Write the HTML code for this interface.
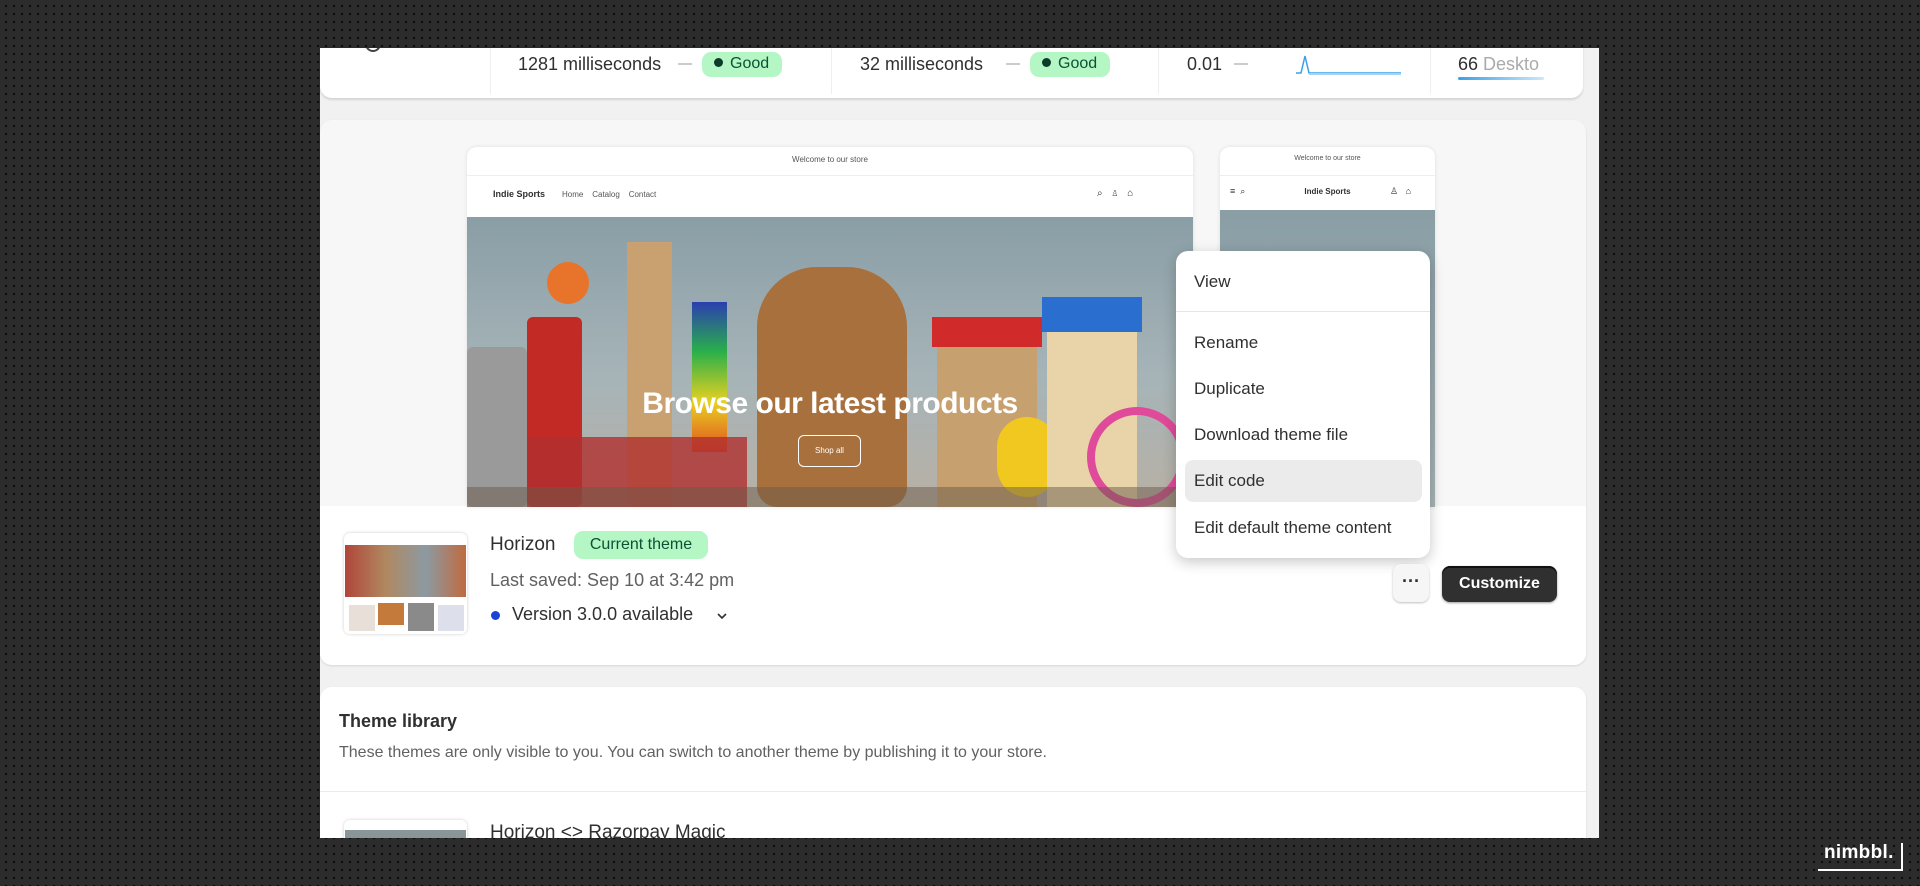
<!DOCTYPE html>
<html><head><meta charset="utf-8"><style>
*{margin:0;padding:0;box-sizing:border-box}
body{width:1920px;height:886px;overflow:hidden;position:relative;font-family:"Liberation Sans",sans-serif;
background-color:#2c2c2c;background-image:radial-gradient(circle,#0e0e0e 1.1px,transparent 1.4px);background-size:8px 8px;background-position:2px 2px}
.a{position:absolute}
#page{left:320px;top:48px;width:1279px;height:790px;background:#f1f1f1;overflow:hidden}
.t{position:absolute;white-space:nowrap;color:#303030}
.badge{position:absolute;background:#b4f7c5;color:#0c5132;border-radius:9px;font-size:16px;}
.dot{display:inline-block;width:9px;height:9px;border-radius:50%;background:#0c3b2a;margin-right:7px;vertical-align:1px}
.div{position:absolute;width:1px;background:#eee}
</style></head><body>
<div id="page" class="a">
 <div class="a" style="left:0;top:-20px;width:1263px;height:70px;background:#fff;border-radius:0 0 12px 12px;box-shadow:0 2px 2px rgba(0,0,0,.12)"></div>
 <div class="a" style="left:45px;top:-6px;width:16px;height:10px;border:2px solid #444;border-top:none;border-radius:0 0 8px 8px"></div>
 <div class="div" style="left:170px;top:0;height:46px"></div>
 <div class="div" style="left:511px;top:0;height:46px"></div>
 <div class="div" style="left:838px;top:0;height:46px"></div>
 <div class="div" style="left:1110px;top:0;height:46px"></div>
 <div class="t" style="left:198px;top:6px;font-size:18px">1281 milliseconds</div>
 <div class="a" style="left:358px;top:15px;width:14px;height:2px;background:#ccc"></div>
 <div class="badge" style="left:382px;top:4px;width:80px;height:25px;padding:3px 0 0 12px"><span class="dot"></span>Good</div>
 <div class="t" style="left:540px;top:6px;font-size:18px">32 milliseconds</div>
 <div class="a" style="left:686px;top:15px;width:14px;height:2px;background:#ccc"></div>
 <div class="badge" style="left:710px;top:4px;width:80px;height:25px;padding:3px 0 0 12px"><span class="dot"></span>Good</div>
 <div class="t" style="left:867px;top:6px;font-size:18px">0.01</div>
 <div class="a" style="left:914px;top:15px;width:14px;height:2px;background:#ccc"></div>
 <svg class="a" style="left:976px;top:4px" width="106" height="24"><path d="M0 21 L5 21 L9 4 L13 21 L105 21" fill="none" stroke="#3aa0e8" stroke-width="1.5"/><path d="M13 22 L105 22" stroke="#a8d4f4" stroke-width="2"/></svg>
 <div class="t" style="left:1138px;top:6px;font-size:18px">66 <span style="color:#aaa">Deskto</span></div>
 <div class="a" style="left:1138px;top:29px;width:86px;height:3px;background:linear-gradient(90deg,#3aa0e8,#cde8fa);border-radius:2px"></div>

 <div class="a" style="left:0;top:72px;width:1266px;height:545px;background:#f7f7f7;border-radius:12px;box-shadow:0 1px 2px rgba(0,0,0,.12);overflow:hidden">
  <div class="a" style="left:0;top:386px;width:1266px;height:159px;background:#fff"></div>
 </div>
 <div class="a" style="left:147px;top:99px;width:726px;height:360px;background:#fff;border-radius:10px 10px 0 0;box-shadow:0 0 4px rgba(0,0,0,.1);overflow:hidden">
  <div class="t" style="left:0;width:726px;text-align:center;top:8px;font-size:8px;color:#555">Welcome to our store</div>
  <div class="a" style="left:0;top:28px;width:726px;height:1px;background:#eee"></div>
  <div class="t" style="left:26px;top:42px;font-size:9px;font-weight:bold">Indie Sports</div>
  <div class="t" style="left:95px;top:43px;font-size:8px;color:#555">Home &nbsp;&nbsp; Catalog &nbsp;&nbsp; Contact</div>
  <div class="t" style="left:630px;top:41px;font-size:10px;color:#333">⌕ &nbsp;&nbsp;♙ &nbsp;&nbsp;⌂</div>
  <div class="a" style="left:0;top:70px;width:726px;height:290px;background:linear-gradient(180deg,#8a9ea6 0%,#a6b4b8 55%,#b8b0a4 100%);overflow:hidden">
   <div class="a" style="left:0;top:130px;width:60px;height:160px;background:#9a9a9a;border-radius:6px"></div>
   <div class="a" style="left:60px;top:100px;width:55px;height:190px;background:#c22a26;border-radius:6px"></div>
   <div class="a" style="left:80px;top:45px;width:42px;height:42px;background:#e8732a;border-radius:50%"></div>
   <div class="a" style="left:160px;top:25px;width:45px;height:265px;background:#c9a070"></div>
   <div class="a" style="left:225px;top:85px;width:35px;height:150px;background:linear-gradient(#2b3fb0,#2ab04a,#e8d020,#e05020)"></div>
   <div class="a" style="left:290px;top:50px;width:150px;height:240px;background:#a8703c;border-radius:60px 60px 20px 20px"></div>
   <div class="a" style="left:470px;top:110px;width:100px;height:180px;background:#c7a070"></div>
   <div class="a" style="left:465px;top:100px;width:110px;height:30px;background:#d02a2a"></div>
   <div class="a" style="left:530px;top:200px;width:60px;height:80px;background:#f0c820;border-radius:30px"></div>
   <div class="a" style="left:580px;top:95px;width:90px;height:195px;background:#e8d4a8"></div>
   <div class="a" style="left:575px;top:80px;width:100px;height:35px;background:#2a6ed0"></div>
   <div class="a" style="left:620px;top:190px;width:100px;height:100px;border:8px solid #e04a9a;border-radius:50%"></div>
   <div class="a" style="left:60px;top:220px;width:220px;height:70px;background:#b03030;opacity:.8"></div>
   <div class="a" style="left:0;top:270px;width:726px;height:20px;background:#6a5a4a;opacity:.5"></div>
   <div class="t" style="left:0;width:726px;text-align:center;top:170px;font-size:30px;font-weight:bold;color:#fff;letter-spacing:-.5px">Browse our latest products</div>
   <div class="a" style="left:331px;top:218px;width:63px;height:32px;border:1.5px solid #fff;border-radius:6px;color:#fff;font-size:8px;text-align:center;line-height:29px">Shop all</div>
  </div>
 </div>
 <div class="a" style="left:900px;top:99px;width:215px;height:360px;background:#fff;border-radius:10px 10px 0 0;box-shadow:0 0 4px rgba(0,0,0,.1);overflow:hidden">
  <div class="t" style="left:0;width:215px;text-align:center;top:8px;font-size:7px;color:#555">Welcome to our store</div>
  <div class="a" style="left:0;top:28px;width:215px;height:1px;background:#eee"></div>
  <div class="t" style="left:10px;top:39px;font-size:9px">≡ &nbsp;⌕</div>
  <div class="t" style="left:0;width:215px;text-align:center;top:40px;font-size:8px;font-weight:bold">Indie Sports</div>
  <div class="t" style="left:170px;top:39px;font-size:9px">♙ &nbsp;&nbsp;⌂</div>
  <div class="a" style="left:0;top:63px;width:215px;height:297px;background:linear-gradient(#8a9ea6,#a8b4b6)"></div>
 </div>

 <div class="a" style="left:856px;top:203px;width:254px;height:307px;background:#fff;border-radius:12px;box-shadow:0 4px 14px rgba(0,0,0,.22)">
  <div class="t" style="left:18px;top:21px;font-size:17px">View</div>
  <div class="a" style="left:0;top:60px;width:254px;height:1px;background:#e6e6e6"></div>
  <div class="t" style="left:18px;top:82px;font-size:17px">Rename</div>
  <div class="t" style="left:18px;top:128px;font-size:17px">Duplicate</div>
  <div class="t" style="left:18px;top:174px;font-size:17px">Download theme file</div>
  <div class="a" style="left:9px;top:209px;width:237px;height:42px;background:#ebebeb;border-radius:8px"></div>
  <div class="t" style="left:18px;top:220px;font-size:17px">Edit code</div>
  <div class="t" style="left:18px;top:267px;font-size:17px">Edit default theme content</div>
 </div>

 <div class="a" style="left:24px;top:485px;width:123px;height:101px;background:#fff;border-radius:6px;box-shadow:0 0 3px rgba(0,0,0,.2);overflow:hidden">
  <div class="a" style="left:1px;top:12px;width:121px;height:52px;background:linear-gradient(90deg,#b0463a,#b08860,#8c9aa2,#c06a40)"></div>
  <div class="a" style="left:5px;top:72px;width:26px;height:26px;background:#e8e0d8"></div>
  <div class="a" style="left:34px;top:70px;width:26px;height:22px;background:#c47a3a"></div>
  <div class="a" style="left:64px;top:70px;width:26px;height:28px;background:#8a8a8a"></div>
  <div class="a" style="left:94px;top:72px;width:26px;height:26px;background:#dde0ea"></div>
 </div>
 <div class="t" style="left:170px;top:486px;font-size:19px;color:#303030">Horizon</div>
 <div class="badge" style="left:254px;top:483px;width:134px;height:28px;font-size:16px;text-align:center;line-height:28px">Current theme</div>
 <div class="t" style="left:170px;top:522px;font-size:18px;color:#616161">Last saved: Sep 10 at 3:42 pm</div>
 <div class="a" style="left:171px;top:563px;width:9px;height:9px;border-radius:50%;background:#1a44d8"></div>
 <div class="t" style="left:192px;top:556px;font-size:18px;color:#303030">Version 3.0.0 available</div>
 <svg class="a" style="left:396px;top:563px" width="12" height="10"><path d="M2 3 L6 7 L10 3" fill="none" stroke="#303030" stroke-width="1.6"/></svg>
 <div class="a" style="left:1073px;top:516px;width:36px;height:38px;border-radius:8px;background:#f6f6f6;box-shadow:0 1px 2px rgba(0,0,0,.25);text-align:center;font-weight:bold;font-size:18px;line-height:34px;color:#303030">···</div>
 <div class="a" style="left:1122px;top:518px;width:115px;height:36px;border-radius:8px;background:#303030;box-shadow:0 2px 0 #111 inset,0 1px 2px rgba(0,0,0,.4);color:#fff;font-weight:bold;font-size:16px;text-align:center;line-height:36px">Customize</div>

 <div class="a" style="left:0;top:639px;width:1266px;height:200px;background:#fff;border-radius:12px;box-shadow:0 1px 2px rgba(0,0,0,.12)">
  <div class="t" style="left:19px;top:24px;font-size:18px;font-weight:bold;color:#303030">Theme library</div>
  <div class="t" style="left:19px;top:57px;font-size:16px;color:#616161">These themes are only visible to you. You can switch to another theme by publishing it to your store.</div>
  <div class="a" style="left:0;top:104px;width:1266px;height:1px;background:#ececec"></div>
  <div class="a" style="left:24px;top:133px;width:123px;height:40px;background:#fff;border-radius:6px;box-shadow:0 0 3px rgba(0,0,0,.2);overflow:hidden"><div class="a" style="left:1px;top:10px;width:121px;height:30px;background:#8a9598"></div></div>
  <div class="t" style="left:170px;top:135px;font-size:19px;color:#303030">Horizon &lt;&gt; Razorpay Magic</div>
 </div>
</div>

<div class="t" style="left:1824px;top:842px;font-size:19px;font-weight:bold;color:#fff;letter-spacing:.3px">nimbbl.</div>
<div class="a" style="left:1818px;top:869px;width:85px;height:2px;background:#fff"></div>
<div class="a" style="left:1901px;top:843px;width:2px;height:28px;background:#fff"></div>
</body></html>
